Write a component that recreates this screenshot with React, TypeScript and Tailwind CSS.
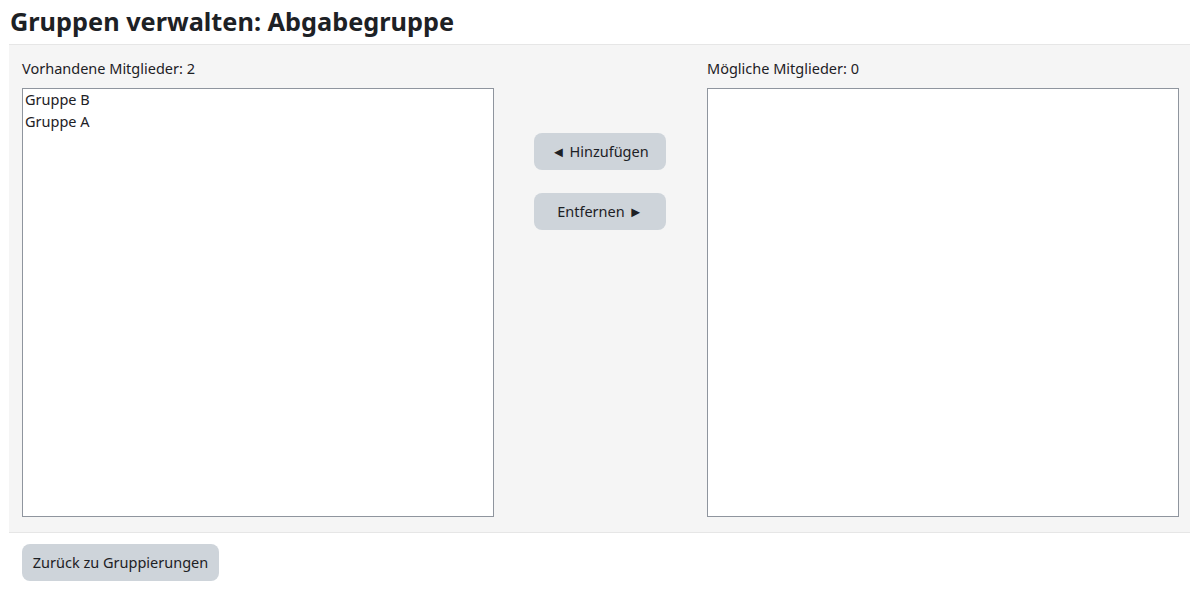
import React from "react";

const font = { fontFamily: '"Noto Sans", "Open Sans", sans-serif' };

export default function App() {
  return (
    <div className="w-[1200px] h-[590px] bg-white text-[#1d2125] overflow-hidden" style={font}>
      <h2 className="pl-[10px] pt-[3px] h-[44px] text-[25.3px] leading-[36px] font-bold text-[#1d2125]">
        Gruppen verwalten: Abgabegruppe
      </h2>
      <div className="ml-[9px] w-[1181px] h-[489px] bg-[#f5f5f5] border-t border-b border-[#e6e6e6] pl-[13px] pr-[11px] pt-[12px]">
        <div className="grid grid-cols-[472px_1fr_472px]">
          <div className="flex flex-col">
            <div className="text-[14.5px] leading-[22px] h-[31px]">Vorhandene Mitglieder: 2</div>
            <div className="h-[429px] bg-white border border-[#8f959e] pl-[2px] text-[14.5px] leading-[22px]">
              <div className="-mt-[1px]">Gruppe B</div>
              <div>Gruppe A</div>
            </div>
          </div>
          <div className="flex flex-col items-start pl-[40px] pt-[76px] gap-[23px]">
            <button className="w-[132px] h-[37px] rounded-[8px] bg-[#ced4da] text-[14.5px] text-[#1d2125]">
              ◄ Hinzufügen
            </button>
            <button className="w-[132px] h-[37px] rounded-[8px] bg-[#ced4da] text-[14.5px] text-[#1d2125]">
              Entfernen ►
            </button>
          </div>
          <div className="flex flex-col">
            <div className="text-[14.5px] leading-[22px] h-[31px]">Mögliche Mitglieder: 0</div>
            <div className="h-[429px] bg-white border border-[#8f959e]"></div>
          </div>
        </div>
      </div>
      <div className="pl-[22px] pt-[11px]">
        <button className="w-[197px] h-[37px] rounded-[8px] bg-[#ced4da] text-[14.5px] text-[#1d2125]">
          Zurück zu Gruppierungen
        </button>
      </div>
    </div>
  );
}
